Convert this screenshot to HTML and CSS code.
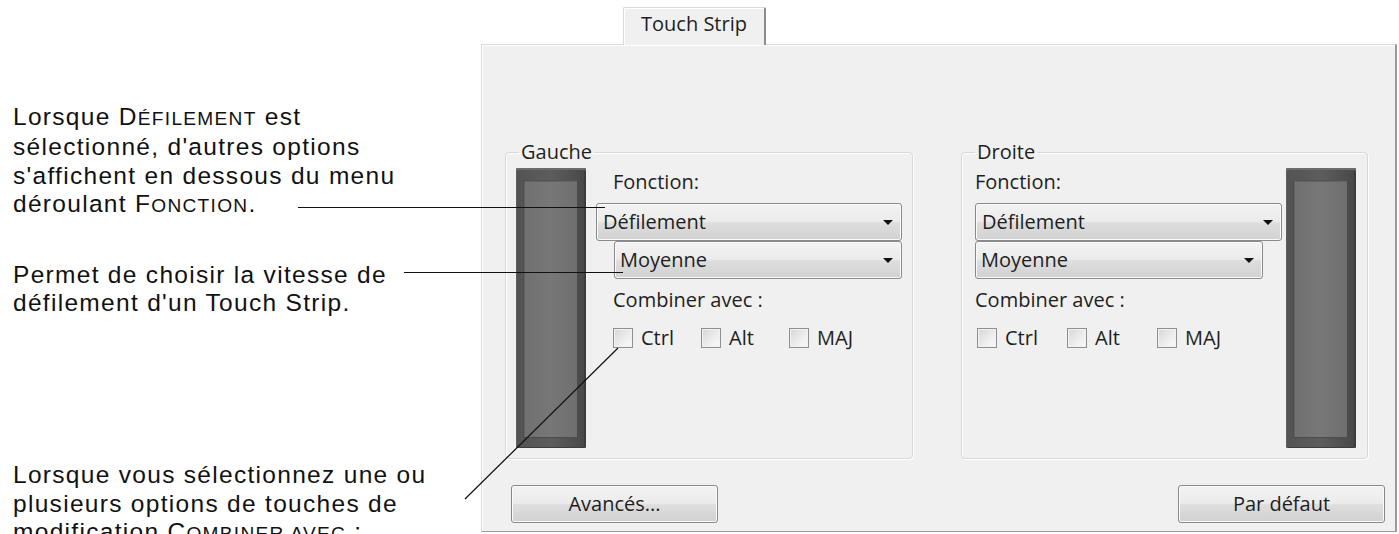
FILE: index.html
```html
<!DOCTYPE html>
<html lang="fr">
<head>
  <meta charset="UTF-8"/>
  <meta name="viewport" content="width=device-width, initial-scale=1.0"/>
  <title>Touch Strip</title>
  <link rel="stylesheet" href="styles.css">
</head>
<body>
  <div class="page">
    <!-- callout texts on the left -->
    <div class="notes">
      <p class="note n1">Lorsque D<span class="sc">éfilement</span> est<br>sélectionné, d'autres options<br>s'affichent en dessous du menu<br>déroulant F<span class="sc">onction</span>.</p>
      <p class="note n2">Permet de choisir la vitesse de<br>défilement d'un Touch Strip.</p>
      <p class="note n3">Lorsque vous sélectionnez une ou<br>plusieurs options de touches de<br>modification C<span class="sc">ombiner avec</span> :</p>
    </div>

    <div class="dialog">
      <div class="tabs">
        <div class="tab">Touch Strip</div>
      </div>
      <div class="panel">
        <div class="groups">
          <fieldset class="group group-left">
            <legend>Gauche</legend>
            <div class="row">
              <div class="strip"><div class="strip-face"></div></div>
              <div class="col">
                <div class="label">Fonction:</div>
                <div class="select">
                  <span>Défilement</span>
                  <svg class="arrow" viewBox="0 0 10 5"><path d="M0 0h10L5 5z"/></svg>
                </div>
                <div class="select sub">
                  <span>Moyenne</span>
                  <svg class="arrow" viewBox="0 0 10 5"><path d="M0 0h10L5 5z"/></svg>
                </div>
                <div class="label">Combiner avec :</div>
                <div class="checks">
                  <label class="check"><span class="box"></span>Ctrl</label>
                  <label class="check"><span class="box"></span>Alt</label>
                  <label class="check"><span class="box"></span>MAJ</label>
                </div>
              </div>
            </div>
          </fieldset>

          <fieldset class="group group-right">
            <legend>Droite</legend>
            <div class="row">
              <div class="col">
                <div class="label">Fonction:</div>
                <div class="select">
                  <span>Défilement</span>
                  <svg class="arrow" viewBox="0 0 10 5"><path d="M0 0h10L5 5z"/></svg>
                </div>
                <div class="select sub">
                  <span>Moyenne</span>
                  <svg class="arrow" viewBox="0 0 10 5"><path d="M0 0h10L5 5z"/></svg>
                </div>
                <div class="label">Combiner avec :</div>
                <div class="checks">
                  <label class="check"><span class="box"></span>Ctrl</label>
                  <label class="check"><span class="box"></span>Alt</label>
                  <label class="check"><span class="box"></span>MAJ</label>
                </div>
              </div>
              <div class="strip"><div class="strip-face"></div></div>
            </div>
          </fieldset>
        </div>

        <div class="buttons">
          <button class="btn">Avancés...</button>
          <button class="btn">Par défaut</button>
        </div>
      </div>
    </div>

    <!-- leader lines from the callouts to the controls -->
    <svg class="leaders" viewBox="0 0 1399 534">
      <line x1="298" y1="207.5" x2="605" y2="207.5"/>
      <line x1="404" y1="272.5" x2="623" y2="272.5"/>
      <line x1="465" y1="499" x2="618" y2="348"/>
    </svg>
  </div>
</body>
</html>
```

FILE: styles.css
```css
:root {
  --win-bg: #f0f0f0;
  --win-text: #1e1e1e;
  --edge-light: #d9d9d9;
  --edge-dark: #9a9a9a;
  --ctrl-border: #8a8a8a;
  --ui-font: 'Open Sans', 'Noto Sans', sans-serif;
  --doc-font: 'Liberation Sans', Arial, sans-serif;
}
*, *::before, *::after { box-sizing: border-box; }
html, body {
  margin: 0; height: 534px;
  overflow: hidden; background: #fff;
}
.page {
  position: relative; display: flex;
  height: 534px;
}

/* Callouts */
.notes {
  width: 481px; flex: none;
  padding-left: 13px;
  font-family: var(--doc-font);
  font-size: 24.5px; line-height: 28.6px; letter-spacing: 1.3px;
  color: #111;
}
.note { margin: 0; }
.n1 { margin-top: 102.5px; }
.n2 { margin-top: 40px; }
.n3 { margin-top: 143px; }
.sc { text-transform: uppercase; font-size: 0.78em; }

/* Dialog */
.dialog {
  width: 916px; flex: none;
  display: flex; flex-direction: column;
  font-family: var(--ui-font); font-size: 20px;
  color: var(--win-text);
}
.tabs {
  height: 44px; padding: 7px 0 0 142px;
  display: flex;
}
.tab {
  position: relative; z-index: 1;
  width: 143px; height: 38px; margin-bottom: -1px;
  padding-top: 4px;
  background: var(--win-bg);
  border: 1px solid var(--edge-light); border-bottom: none;
  border-right: 2px solid #8c8c8c;
  border-radius: 2px 2px 0 0;
  box-shadow: inset 1px 1px 0 #fff;
  text-align: center; line-height: 24px;
}
.panel {
  height: 488px;
  display: flex; flex-direction: column;
  padding: 97px 10px 8px 23px;
  background: var(--win-bg);
  border: 1px solid var(--edge-light);
  border-right: 2px solid var(--edge-dark);
  border-bottom-color: var(--edge-dark);
  box-shadow: inset 1px 1px 0 #fff;
}
.groups { display: flex; gap: 48px; }
.group {
  margin: 0; min-width: 0;
  padding: 6px 10px 10px;
  border: 1px solid #d6d9dc; border-radius: 4px;
  box-shadow: inset 1px 1px 0 #fff, 1px 1px 0 #fff;
}
.group-left { width: 408px; }
.group-right { width: 407px; }
.group legend {
  margin-left: 3px; padding: 0 2px;
  line-height: 20px;
}
.row { display: flex; gap: 10px; }
.group-right .row { gap: 4px; padding-left: 3px; }

/* Touch strip picture */
.strip {
  width: 70px; height: 280px; flex: none;
  padding: 12px 8px 10px 7px;
  background: linear-gradient(90deg, #535353, #5d5d5d 50%, #474747);
  border-radius: 2px;
  box-shadow: inset 0 2px 0 #6c6c6c, inset 1px 0 0 #5f5f5f, inset -2px 0 0 #3d3d3d, inset 0 -1px 0 #3d3d3d;
}
.strip-face {
  height: 100%;
  background: linear-gradient(90deg, #707070, #777 50%, #6f6f6f);
  border: 1px solid #4b4b4b; border-top-color: #525252;
  box-shadow: inset 1px 1px 0 #636363;
}

.col { width: 306px; display: flex; flex-direction: column; }
.group-right .col { width: 307px; }
.label { line-height: 24px; margin-top: 2px; padding-left: 17px; }
.label + .checks { margin-top: 14px; }
.select + .select + .label { margin-top: 9px; }
.group-right .label, .group-right .checks { padding-left: 0; }
.group-right .checks { padding-left: 2px; }

.select, .btn {
  border: 1px solid var(--ctrl-border); border-radius: 3px;
  background: linear-gradient(#f3f3f3, #ebebeb 48%, #dedede 52%, #d1d1d1);
  box-shadow: inset 0 0 0 1px #fbfbfb;
}
.select {
  height: 38px; margin-top: 9px;
  display: flex; align-items: center; justify-content: space-between;
  padding: 0 8px 0 6px; line-height: 24px;
}
.select.sub { margin-top: 0; margin-left: 18px; width: 288px; padding-left: 5px; }
.group-right .select.sub { margin-left: 0; }
.arrow { width: 10px; height: 5px; fill: #111; }

.checks { display: flex; padding-left: 17px; line-height: 24px; }
.check { width: 88px; display: flex; align-items: center; gap: 8px; }
.group-right .check { width: 90px; }
.box {
  width: 20px; height: 20px; flex: none;
  border: 1px solid #8e8f8f;
  background: linear-gradient(135deg, #d6d6d6, #ececec 55%, #fbfbfb);
  box-shadow: inset 0 0 0 1px #f2f2f2;
}

.buttons {
  display: flex; justify-content: space-between;
  margin-top: 26px; padding-left: 6px;
}
.btn {
  width: 207px; height: 38px; padding: 0;
  font: inherit; line-height: 24px; color: var(--win-text);
}

.leaders {
  position: absolute; top: 0; left: 0;
  width: 1399px; height: 534px;
  pointer-events: none;
  stroke: #111; stroke-width: 1.2;
}
```
